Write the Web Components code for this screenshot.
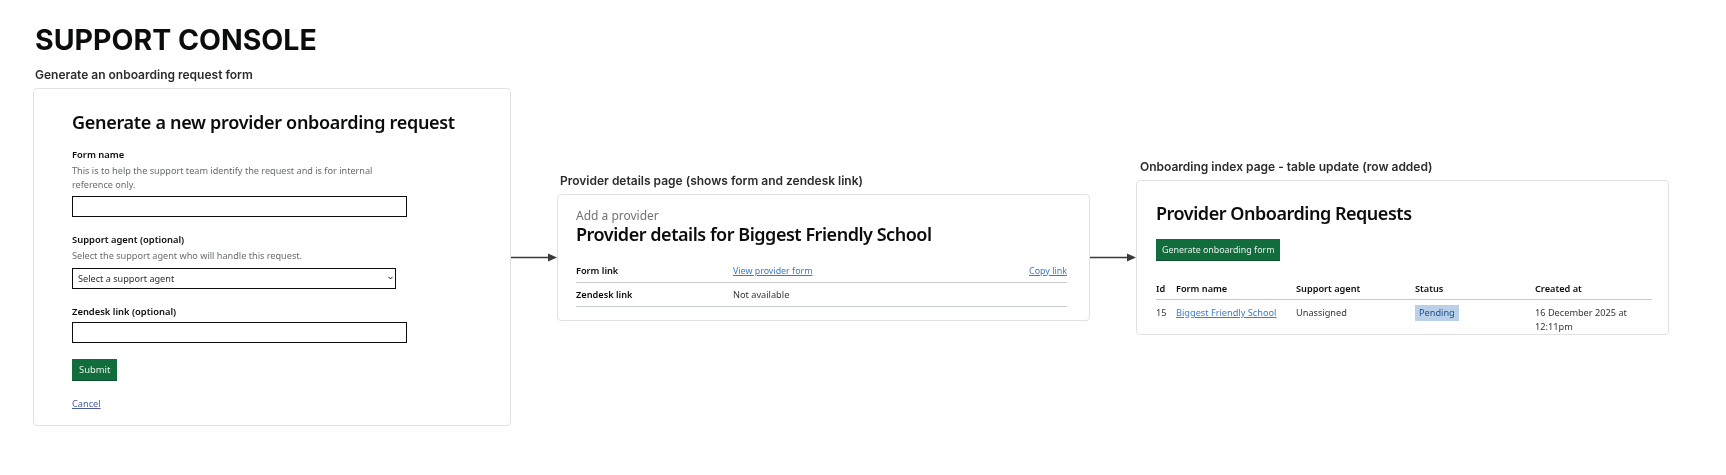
<!DOCTYPE html>
<html lang="en">
<head>
<meta charset="utf-8">
<title>Support console</title>
<style>
  html, body { margin: 0; background: #fff; }
  body { width: 1726px; height: 475px; overflow: hidden; font-family: "Noto Sans", sans-serif; color: #0b0c0c; }
</style>
</head>
<body>
<support-board>
  <flow-stage slot="first" label="Generate an onboarding request form" style="--label-left:2px;--top:67px;--width:478px;--height:338px">
    <gov-heading style="--mt:4px">Generate a new provider onboarding request</gov-heading>
    <form-field label="Form name" hint="This is to help the support team identify the request and is for internal reference only." width="335" style="--label-mt:13px"></form-field>
    <form-field label="Support agent (optional)" hint="Select the support agent who will handle this request." select="Select a support agent" width="324" style="--label-mt:16px;--control-mt:5px"></form-field>
    <form-field label="Zendesk link (optional)" width="335" style="--label-mt:16px;--control-mt:3px"></form-field>
    <gov-button style="--mt:16px;--pad:7px;--size:9.4px">Submit</gov-button>
    <gov-link style="--mt:17px;--color:#4c5c9c">Cancel</gov-link>
  </flow-stage>
  <flow-arrow slot="arrow-one" style="--top:257px;--width:46px"></flow-arrow>
  <flow-stage slot="second" label="Provider details page (shows form and zendesk link)" style="--label-left:3px;--top:173px;--width:533px;--height:127px">
    <provider-details></provider-details>
  </flow-stage>
  <flow-arrow slot="arrow-two" style="--top:257px;--width:46px"></flow-arrow>
  <flow-stage slot="third" label="Onboarding index page - table update (row added)" style="--label-left:4px;--top:159px;--width:533px;--height:155px">
    <requests-index></requests-index>
  </flow-stage>
</support-board>

<script>
// shared bits of GOV.UK looking type
const BODY_FONT = '"Noto Sans", sans-serif';
const HEADING_TYPE = `font-weight: 600; font-size: 18px; letter-spacing: -0.3px;`;
const PAGE_HEADING_TYPE = `font-weight: 600; font-size: 18px; letter-spacing: -0.47px;`;

class SupportBoard extends HTMLElement {
  constructor() {
    super();
    this.attachShadow({ mode: 'open' });
    this.shadowRoot.innerHTML = `
      <style>
        :host { display: block; padding: 0 0 0 33px; filter: blur(0.35px); }
        h1 { margin: 0; padding: 25px 0 0 2px; font: 700 28.5px/30px Inter, sans-serif; color: #0b0c0c; height: 30px; }
        .flow { display: flex; align-items: flex-start; margin-top: -55px; }
      </style>
      <h1>SUPPORT CONSOLE</h1>
      <div class="flow">
        <slot name="first"></slot>
        <slot name="arrow-one"></slot>
        <slot name="second"></slot>
        <slot name="arrow-two"></slot>
        <slot name="third"></slot>
      </div>
    `;
  }
}

class FlowStage extends HTMLElement {
  constructor() {
    super();
    this.attachShadow({ mode: 'open' });
  }
  connectedCallback() {
    this.shadowRoot.innerHTML = `
      <style>
        :host { display: block; flex: none; width: var(--width); margin-top: var(--top); }
        .label { margin: 0 0 6px var(--label-left); font: 600 12px/15px Inter, sans-serif; color: #2b2c2c; white-space: nowrap; }
        .card { box-sizing: border-box; height: var(--height); border: 1px solid #dfe1e3; border-radius: 4px; background: #fff; padding: 0; }
      </style>
      <p class="label">${this.getAttribute('label')}</p>
      <div class="card"><slot></slot></div>
    `;
  }
}

class FlowArrow extends HTMLElement {
  constructor() {
    super();
    this.attachShadow({ mode: 'open' });
    this.shadowRoot.innerHTML = `
      <style>
        :host { display: block; flex: none; width: var(--width); height: 9px; margin-top: calc(var(--top) - 4px); }
        svg { display: block; }
      </style>
      <svg width="46" height="9" viewBox="0 0 46 9"><path d="M0 4.5H38" stroke="#3a3a3a" stroke-width="1.3"/><path d="M37 0.5L46 4.5L37 8.5Z" fill="#3a3a3a"/></svg>
    `;
  }
}

class GovHeading extends HTMLElement {
  constructor() {
    super();
    this.attachShadow({ mode: 'open' });
    this.shadowRoot.innerHTML = `
      <style>
        :host { display: block; margin: var(--mt, 0) 0 0 38px; ${HEADING_TYPE} line-height: 26px; font-family: ${BODY_FONT}; color: #0b0c0c; white-space: nowrap; padding-top: 16px; }
      </style>
      <slot></slot>
    `;
  }
}

class FormField extends HTMLElement {
  constructor() {
    super();
    this.attachShadow({ mode: 'open' });
  }
  connectedCallback() {
    const hint = this.getAttribute('hint');
    const select = this.getAttribute('select');
    const width = this.getAttribute('width');
    const control = select
      ? `<div class="select" style="width:${width}px"><select><option>${select}</option></select><svg width="5" height="4" viewBox="0 0 5 4"><path d="M0.5 0.8L2.5 3L4.5 0.8" fill="none" stroke="#222" stroke-width="1"/></svg></div>`
      : `<input type="text" style="width:${width}px">`;
    this.shadowRoot.innerHTML = `
      <style>
        :host { display: block; margin: 0 0 0 38px; font-family: ${BODY_FONT}; }
        label { display: block; margin-top: var(--label-mt, 0); font-size: 9.4px; line-height: 14px; font-weight: 600; color: #0b0c0c; }
        .hint { width: 320px; margin-top: 2px; font-size: 9.15px; line-height: 14px; color: #686c6e; }
        input, select { display: block; box-sizing: border-box; height: 21px; margin-top: var(--control-mt, 4px); border: 1px solid #0b0c0c; border-radius: 0; background: #fff; font: 9.15px ${BODY_FONT}; color: #2b2c2c; padding: 0 5px; outline: 0; }
        .select { position: relative; }
        select { width: 100%; appearance: none; -webkit-appearance: none; }
        .select svg { position: absolute; right: 3px; top: 8px; }
      </style>
      <label>${this.getAttribute('label')}</label>
      ${hint ? `<div class="hint">${hint}</div>` : ''}
      ${control}
    `;
  }
}

class GovButton extends HTMLElement {
  constructor() {
    super();
    this.attachShadow({ mode: 'open' });
    this.shadowRoot.innerHTML = `
      <style>
        :host { display: block; width: fit-content; margin: var(--mt, 0) 0 0 var(--ml, 38px); }
        button { display: block; box-sizing: border-box; height: 21px; padding: 0 var(--pad, 6px); border: 0; background: #126d3d; color: #e8f1ec; font: var(--size, 8.9px)/21px ${BODY_FONT}; box-shadow: 0 1px 0 #0e4f2d; }
      </style>
      <button type="button"><slot></slot></button>
    `;
  }
}

class GovLink extends HTMLElement {
  constructor() {
    super();
    this.attachShadow({ mode: 'open' });
    this.shadowRoot.innerHTML = `
      <style>
        :host { display: block; width: fit-content; margin: var(--mt, 0) 0 0 38px; font: 9.2px/14px ${BODY_FONT}; }
        a { color: var(--color, #3b7cc4); text-decoration: underline; }
      </style>
      <a href="#"><slot></slot></a>
    `;
  }
}

class ProviderDetails extends HTMLElement {
  constructor() {
    super();
    this.attachShadow({ mode: 'open' });
    this.shadowRoot.innerHTML = `
      <style>
        :host { display: block; padding: 14px 22px 0 18px; font-family: ${BODY_FONT}; }
        .caption { font-size: 12px; line-height: 14px; color: #6f7374; }
        h2 { margin: 0; ${PAGE_HEADING_TYPE} line-height: 22px; color: #0b0c0c; white-space: nowrap; }
        dl { margin: 14px 0 0; font-size: 9.2px; line-height: 14px; }
        .row { display: grid; box-sizing: border-box; grid-template-columns: 157px 1fr auto; align-items: center; height: 24px; border-bottom: 1px solid #c9cccd; }
        dt { font-weight: 600; color: #0b0c0c; }
        dd { margin: 0; color: #333637; }
        a { color: #3b7cc4; font-size: 8.9px; }
      </style>
      <div class="caption">Add a provider</div>
      <h2>Provider details for Biggest Friendly School</h2>
      <dl>
        <div class="row"><dt>Form link</dt><dd><a href="#">View provider form</a></dd><dd><a href="#">Copy link</a></dd></div>
        <div class="row"><dt>Zendesk link</dt><dd>Not available</dd></div>
      </dl>
    `;
  }
}

class RequestsIndex extends HTMLElement {
  constructor() {
    super();
    this.attachShadow({ mode: 'open' });
    this.shadowRoot.innerHTML = `
      <style>
        :host { display: block; padding: 20px 16px 0 19px; font-family: ${BODY_FONT}; }
        h2 { margin: 0; ${PAGE_HEADING_TYPE} line-height: 24px; color: #0b0c0c; white-space: nowrap; }
        gov-button { --mt: 14px; --ml: 0; }
        table { width: 100%; margin-top: 22px; border-collapse: collapse; table-layout: fixed; font-size: 9.2px; line-height: 14px; color: #333637; }
        th { text-align: left; font-weight: 600; color: #0b0c0c; padding: 0 0 3px; border-bottom: 1px solid #c9cccd; height: 14px; }
        td { vertical-align: top; padding: 6px 0 0; }
        a { color: #3b7cc4; }
        .tag { display: inline-block; margin-top: -2px; padding: 1px 4px; background: #b9d0e8; color: #1d4f8a; }
      </style>
      <h2>Provider Onboarding Requests</h2>
      <gov-button>Generate onboarding form</gov-button>
      <table>
        <colgroup><col style="width:20px"><col style="width:120px"><col style="width:119px"><col style="width:120px"><col></colgroup>
        <thead><tr><th>Id</th><th>Form name</th><th>Support agent</th><th>Status</th><th>Created at</th></tr></thead>
        <tbody><tr><td>15</td><td><a href="#">Biggest Friendly School</a></td><td>Unassigned</td><td><span class="tag">Pending</span></td><td>16 December 2025 at 12:11pm</td></tr></tbody>
      </table>
    `;
  }
}

customElements.define('support-board', SupportBoard);
customElements.define('flow-stage', FlowStage);
customElements.define('flow-arrow', FlowArrow);
customElements.define('gov-heading', GovHeading);
customElements.define('form-field', FormField);
customElements.define('gov-button', GovButton);
customElements.define('gov-link', GovLink);
customElements.define('provider-details', ProviderDetails);
customElements.define('requests-index', RequestsIndex);
</script>
</body>
</html>
